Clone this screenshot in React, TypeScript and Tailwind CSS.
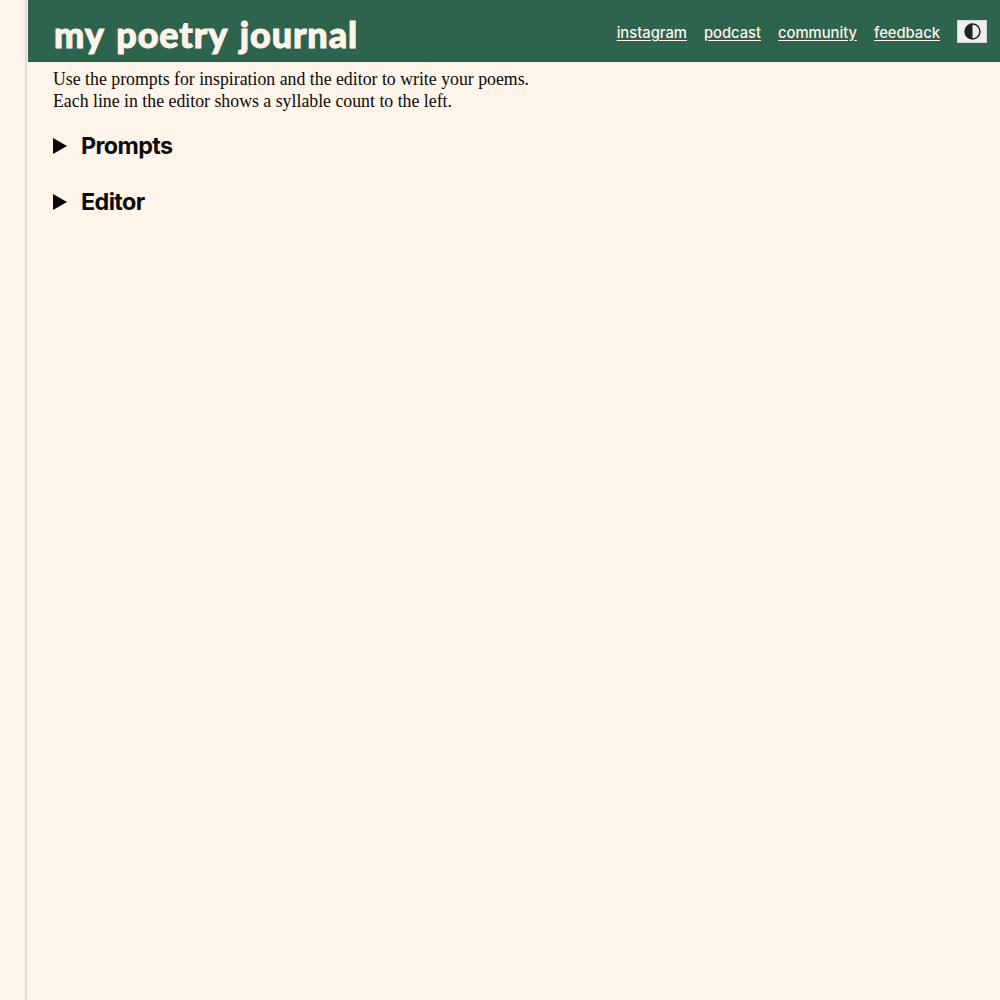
import { useState } from "react";

const links = ["instagram", "podcast", "community", "feedback"];

function ContrastIcon() {
  return (
    <svg width="17" height="17" viewBox="0 0 16 16" aria-hidden="true">
      <circle cx="8" cy="8" r="7" fill="#f0eeee" stroke="#202124" strokeWidth="1.4" />
      <path d="M8 1a7 7 0 0 0 0 14z" fill="#202124" />
    </svg>
  );
}

function Section({ title }: { title: string }) {
  const [open, setOpen] = useState(false);
  return (
    <details open={open} onToggle={(e) => setOpen(e.currentTarget.open)}>
      <summary className="flex h-[32px] cursor-pointer list-none items-center">
        <svg width="14" height="16" viewBox="0 0 14 16" className="mr-[14px]" aria-hidden="true">
          <path d="M0 0l14 8-14 8z" fill="#0a0a0a" />
        </svg>
        <span className="font-['Inter',sans-serif] text-[23.3px] font-bold tracking-[-0.6px] text-[#0a0a0a]">
          {title}
        </span>
      </summary>
    </details>
  );
}

export default function App() {
  return (
    <div className="flex min-h-screen bg-[#fff4e9]">
      <div className="w-[27px] shrink-0 border-r-2 border-[#e3dbd2]" />
      <div className="ml-px min-w-0 flex-1">
        <header className="flex h-[62px] items-center justify-between border-b border-[#2a5a47] bg-[#2e634e] pl-[26px] pr-[13px]">
          <h1 className="mt-[7px] font-['Lato',sans-serif] text-[36px] leading-none font-black tracking-[0.87px] [word-spacing:3px] text-[#fff4e9] [-webkit-text-stroke:1px_#fff4e9]">
            my poetry journal
          </h1>
          <nav className="flex items-center gap-[17px]">
            {links.map((l) => (
              <a
                key={l}
                href="#"
                className="mt-[6px] font-['Inter',sans-serif] text-[14.75px] leading-none font-medium text-[#fff4e9] underline underline-offset-2"
              >
                {l}
              </a>
            ))}
            <button className="mt-[1px] flex h-[23px] w-[30px] items-center justify-center border border-[#d8d8d8] bg-[#f0eeee]">
              <ContrastIcon />
            </button>
          </nav>
        </header>
        <main className="pl-[25px]">
          <p className="mt-[6px] font-['Liberation_Serif',serif] text-[17.8px] leading-[22px] text-[#0a0a0a]">
            Use the prompts for inspiration and the editor to write your poems.
            <br />
            Each line in the editor shows a syllable count to the left.
          </p>
          <div className="mt-[18px] flex flex-col gap-[24px]">
            <Section title="Prompts" />
            <Section title="Editor" />
          </div>
        </main>
      </div>
    </div>
  );
}
